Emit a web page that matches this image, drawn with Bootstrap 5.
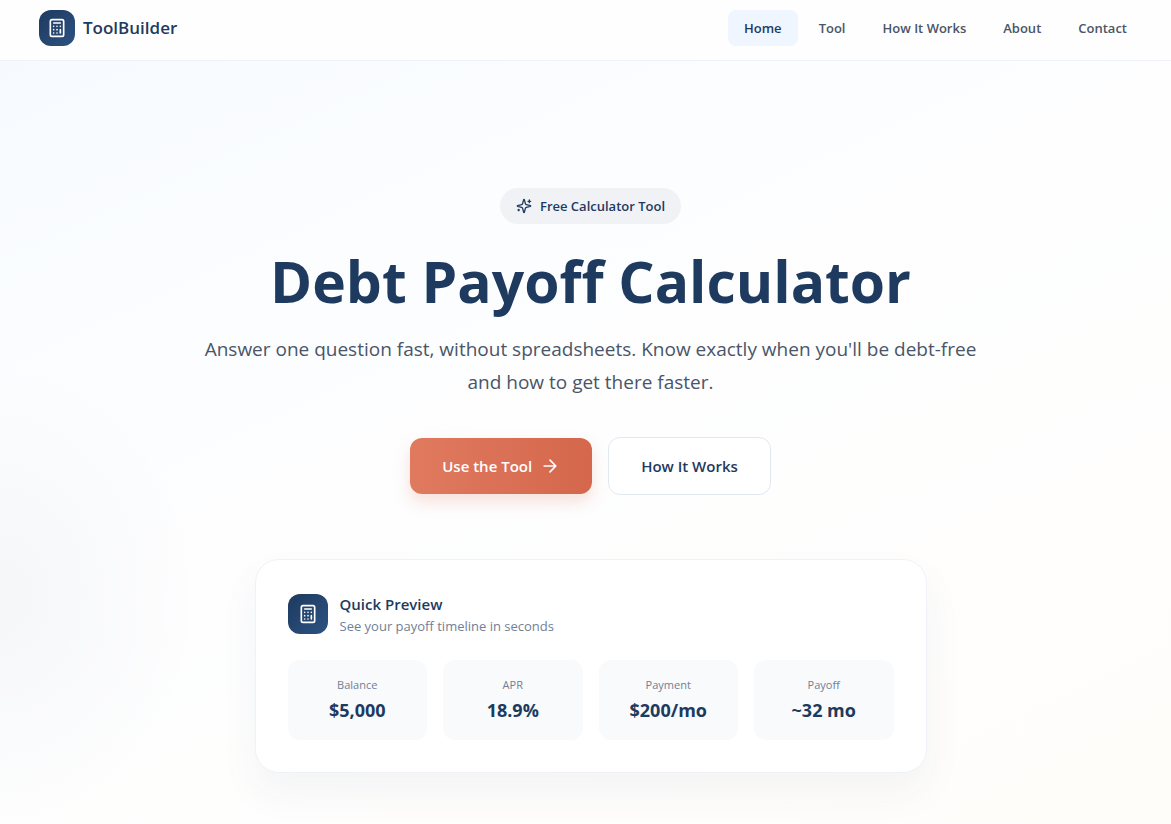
<!DOCTYPE html>
<html lang="en">
<head>
<meta charset="utf-8">
<meta name="viewport" content="width=device-width, initial-scale=1">
<title>ToolBuilder – Debt Payoff Calculator</title>
<link href="https://cdn.jsdelivr.net/npm/bootstrap@5.3.0/dist/css/bootstrap.min.css" rel="stylesheet">
<style>
  :root { --navy: #1e3a5f; --slate: #4a5568; --muted: #718096; --line: #eff3f9; }
  body {
    font-family: "Open Sans", "Noto Sans", sans-serif;
    color: var(--navy);
    min-height: 100vh;
    background:
      radial-gradient(ellipse 200px 240px at 0 600px, rgba(30, 58, 95, .035), transparent),
      linear-gradient(155deg, #f5faff 0%, #fcfdff 30%, #fefefe 60%, #fffdfa 100%);
  }
  .site-bar { background: #fefefe; border-bottom: 1px solid var(--line); padding: 10px 28px 14px 39px; }
  .brand-name { font-size: 17px; line-height: 28px; font-weight: 600; color: var(--navy); }
  .tile-icon { background: linear-gradient(135deg, #1e3a5f, #2c5282); width: 36px; height: 36px; border-radius: 12px; }
  .tile-icon.roomy { width: 40px; height: 40px; }
  .site-nav { gap: 5px; }
  .site-link { font-size: 13px; line-height: 20px; font-weight: 600; color: var(--slate); padding: 8px 16px; border-radius: 8px; }
  .site-link.active { background: #eff6ff; color: var(--navy); }
  .hero { padding: 127px 16px 51px 26px; }
  .pill-tag { background: #f0f2f6; font-size: 13px; line-height: 20px; font-weight: 600; padding: 8px 16px; }
  .hero-title { font-size: 57px; line-height: 66px; font-weight: 700; margin: 24px 0 19px; }
  .hero-text { font-size: 19px; line-height: 33px; color: var(--slate); max-width: 800px; margin-bottom: 38px; }
  .cta { font-size: 15px; line-height: 24px; font-weight: 600; padding: 16px 32px; border-radius: 12px; border: 0; }
  .cta-main, .cta-main:hover { color: #fff; background: linear-gradient(90deg, #e07a5f, #d4674c); box-shadow: 0 8px 16px rgba(224, 122, 95, .22); }
  .cta-alt, .cta-alt:hover { color: var(--navy); background: #fff; border: 1px solid #e2e8f0; }
  .preview { max-width: 672px; margin-top: 64px; padding: 32px; background: #fff; border: 1px solid var(--line); border-radius: 24px; box-shadow: 0 20px 40px rgba(30, 58, 95, .05); }
  .preview-title { font-size: 15px; line-height: 24px; font-weight: 600; }
  .preview-note { font-size: 13px; line-height: 20px; color: var(--muted); }
  .stat { background: #f8fafc; border-radius: 12px; padding: 17px 16px; }
  .stat dt { font-size: 11px; line-height: 16px; font-weight: 400; color: var(--muted); margin-bottom: 4px; }
  .stat dd { font-size: 18px; line-height: 26px; font-weight: 700; margin: 0; }
</style>
</head>
<body>
<svg class="d-none" aria-hidden="true">
  <symbol id="calc" viewBox="0 0 24 24" fill="none" stroke="currentColor" stroke-width="2" stroke-linecap="round" stroke-linejoin="round">
    <rect x="4" y="2" width="16" height="20" rx="2"/><path d="M8 6h8M16 14v4M16 10h.01M12 10h.01M8 10h.01M12 14h.01M8 14h.01M12 18h.01M8 18h.01"/>
  </symbol>
</svg>
<header class="site-bar d-flex flex-wrap align-items-center justify-content-between">
  <a href="#" class="d-flex align-items-center gap-2 text-decoration-none">
    <span class="tile-icon d-flex align-items-center justify-content-center text-white"><svg width="20" height="20"><use href="#calc"/></svg></span>
    <span class="brand-name">ToolBuilder</span>
  </a>
  <nav class="nav site-nav" aria-label="Main">
    <a class="nav-link site-link active" aria-current="page" href="#">Home</a>
    <a class="nav-link site-link" href="#tool">Tool</a>
    <a class="nav-link site-link" href="#how">How It Works</a>
    <a class="nav-link site-link" href="#about">About</a>
    <a class="nav-link site-link" href="#contact">Contact</a>
  </nav>
</header>
<main class="hero d-flex flex-column align-items-center text-center">
  <div class="pill-tag rounded-pill d-flex align-items-center gap-2">
    <svg width="16" height="16" viewBox="0 0 24 24" fill="none" stroke="currentColor" stroke-width="2" stroke-linecap="round" stroke-linejoin="round" aria-hidden="true"><path d="M9.937 15.5A2 2 0 0 0 8.5 14.063l-6.135-1.582a.5.5 0 0 1 0-.962L8.5 9.936A2 2 0 0 0 9.937 8.5l1.582-6.135a.5.5 0 0 1 .963 0L14.063 8.5A2 2 0 0 0 15.5 9.937l6.135 1.581a.5.5 0 0 1 0 .964L15.5 14.063a2 2 0 0 0-1.437 1.437l-1.582 6.135a.5.5 0 0 1-.963 0zM20 3v4M22 5h-4M4 17v2M5 18H3"/></svg>
    <span>Free Calculator Tool</span>
  </div>
  <h1 class="hero-title">Debt Payoff Calculator</h1>
  <p class="hero-text">Answer one question fast, without spreadsheets. Know exactly when you'll be debt-free and how to get there faster.</p>
  <div class="d-flex flex-wrap align-items-center justify-content-center gap-3">
    <button type="button" class="btn cta cta-main d-flex align-items-center gap-2">Use the Tool
      <svg width="20" height="20" viewBox="0 0 24 24" fill="none" stroke="currentColor" stroke-width="2" stroke-linecap="round" stroke-linejoin="round" aria-hidden="true"><path d="M5 12h14M12 5l7 7-7 7"/></svg>
    </button>
    <button type="button" class="btn cta cta-alt">How It Works</button>
  </div>
  <section class="preview w-100">
    <div class="d-flex align-items-center text-start mb-4">
      <span class="tile-icon roomy d-flex align-items-center justify-content-center text-white"><svg width="20" height="20"><use href="#calc"/></svg></span>
      <div class="ps-2 ms-1">
        <h2 class="preview-title mb-0">Quick Preview</h2>
        <p class="preview-note mb-0">See your payoff timeline in seconds</p>
      </div>
    </div>
    <dl class="row row-cols-2 row-cols-md-4 g-3 mb-0">
      <div class="col"><div class="stat"><dt>Balance</dt><dd>$5,000</dd></div></div>
      <div class="col"><div class="stat"><dt>APR</dt><dd>18.9%</dd></div></div>
      <div class="col"><div class="stat"><dt>Payment</dt><dd>$200/mo</dd></div></div>
      <div class="col"><div class="stat"><dt>Payoff</dt><dd>~32 mo</dd></div></div>
    </dl>
  </section>
</main>
<script src="https://cdn.jsdelivr.net/npm/bootstrap@5.3.0/dist/js/bootstrap.bundle.min.js"></script>
</body>
</html>
